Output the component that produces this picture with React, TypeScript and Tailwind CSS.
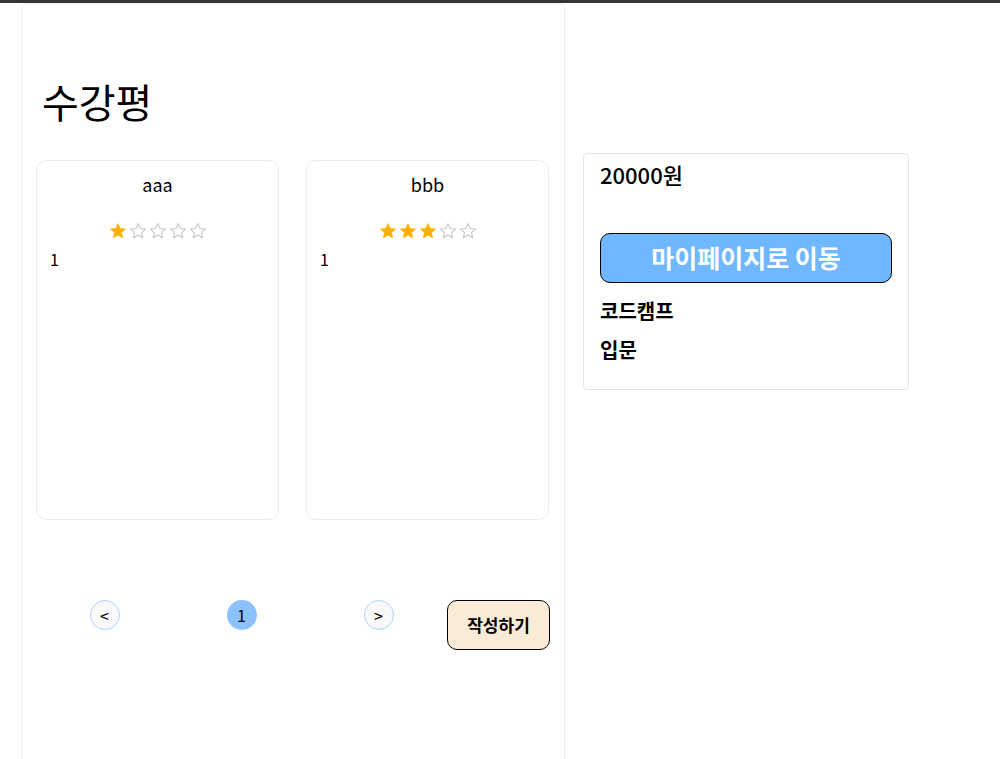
import React from "react"

const kr = { fontFamily: '"Noto Sans CJK KR", "Noto Sans", sans-serif' }

interface Review {
  name: string
  rating: number
  contents: string
}

const reviews: Review[] = [
  { name: "aaa", rating: 1, contents: "1" },
  { name: "bbb", rating: 3, contents: "1" },
]

function Star({ filled }: { filled: boolean }) {
  return (
    <svg width="18" height="18" viewBox="0 0 24 24" className="block">
      <path
        d="M12 2.2l2.9 6.6 7.1.6-5.4 4.7 1.6 7-6.2-3.7-6.2 3.7 1.6-7L2 9.4l7.1-.6z"
        fill={filled ? "#fbb000" : "none"}
        stroke={filled ? "#fbb000" : "#c4c4c4"}
        strokeWidth={filled ? 1 : 1.4}
        strokeLinejoin="round"
      />
    </svg>
  )
}

function ReviewCard({ review }: { review: Review }) {
  return (
    <div className="w-[243px] h-[360px] rounded-[10px] border border-[#ededed] bg-white px-[13px] pt-[11px]">
      <div className="text-center text-[18px] leading-[24px] text-black" style={kr}>
        {review.name}
      </div>
      <div className="mt-[26px] flex justify-center gap-[2px]">
        {[1, 2, 3, 4, 5].map((i) => (
          <Star key={i} filled={i <= review.rating} />
        ))}
      </div>
      <div className="mt-[8px] text-[16px] leading-[22px] text-black" style={kr}>
        {review.contents}
      </div>
    </div>
  )
}

function PageButton({ children, active }: { children: React.ReactNode; active?: boolean }) {
  return (
    <button
      className={
        active
          ? "h-[30px] w-[30px] rounded-full bg-[#8bc1ff] text-[16px] leading-none text-black"
          : "h-[30px] w-[30px] rounded-full border border-[#aed2ff] bg-[#f9f9f9] text-[16px] leading-none text-black"
      }
      style={kr}
    >
      {children}
    </button>
  )
}

export default function App() {
  return (
    <div className="min-h-[759px] w-full bg-white border-t-[3px] border-[#353535]">
      <div className="flex">
        {/* Reviews */}
        <div className="ml-[21px] w-[544px] min-h-[756px] rounded-t-[6px] border border-b-0 border-[#eeeeee] px-[14px]">
          <h1 className="ml-[6px] mt-[71px] text-[40px] leading-[52px] text-black" style={kr}>
            수강평
          </h1>
          <div className="mt-[33px] flex gap-[27px]">
            {reviews.map((r) => (
              <ReviewCard key={r.name} review={r} />
            ))}
          </div>
          <div className="mt-[80px] flex items-start">
            <div className="flex flex-1 justify-around">
              <PageButton>&lt;</PageButton>
              <PageButton active>1</PageButton>
              <PageButton>&gt;</PageButton>
            </div>
            <button
              className="h-[50px] w-[103px] rounded-[10px] border border-black bg-[#faebd7] text-[17px] font-bold text-black"
              style={kr}
            >
              작성하기
            </button>
          </div>
        </div>

        {/* Course info */}
        <div className="ml-[18px] mt-[150px] h-[237px] w-[326px] rounded-[4px] border border-[#e4e4e4] px-[16px] pt-[5px] self-start">
          <div className="text-[22px] leading-[30px] font-medium text-black" style={kr}>
            20000원
          </div>
          <button
            className="mt-[44px] h-[50px] w-[292px] rounded-[10px] border border-black bg-[#6fb7ff] text-[25px] font-bold text-white"
            style={kr}
          >
            마이페이지로 이동
          </button>
          <div className="mt-[14px] text-[20px] leading-[28px] font-bold text-black" style={kr}>
            코드캠프
          </div>
          <div className="mt-[11px] text-[20px] leading-[28px] font-bold text-black" style={kr}>
            입문
          </div>
        </div>
      </div>
    </div>
  )
}
